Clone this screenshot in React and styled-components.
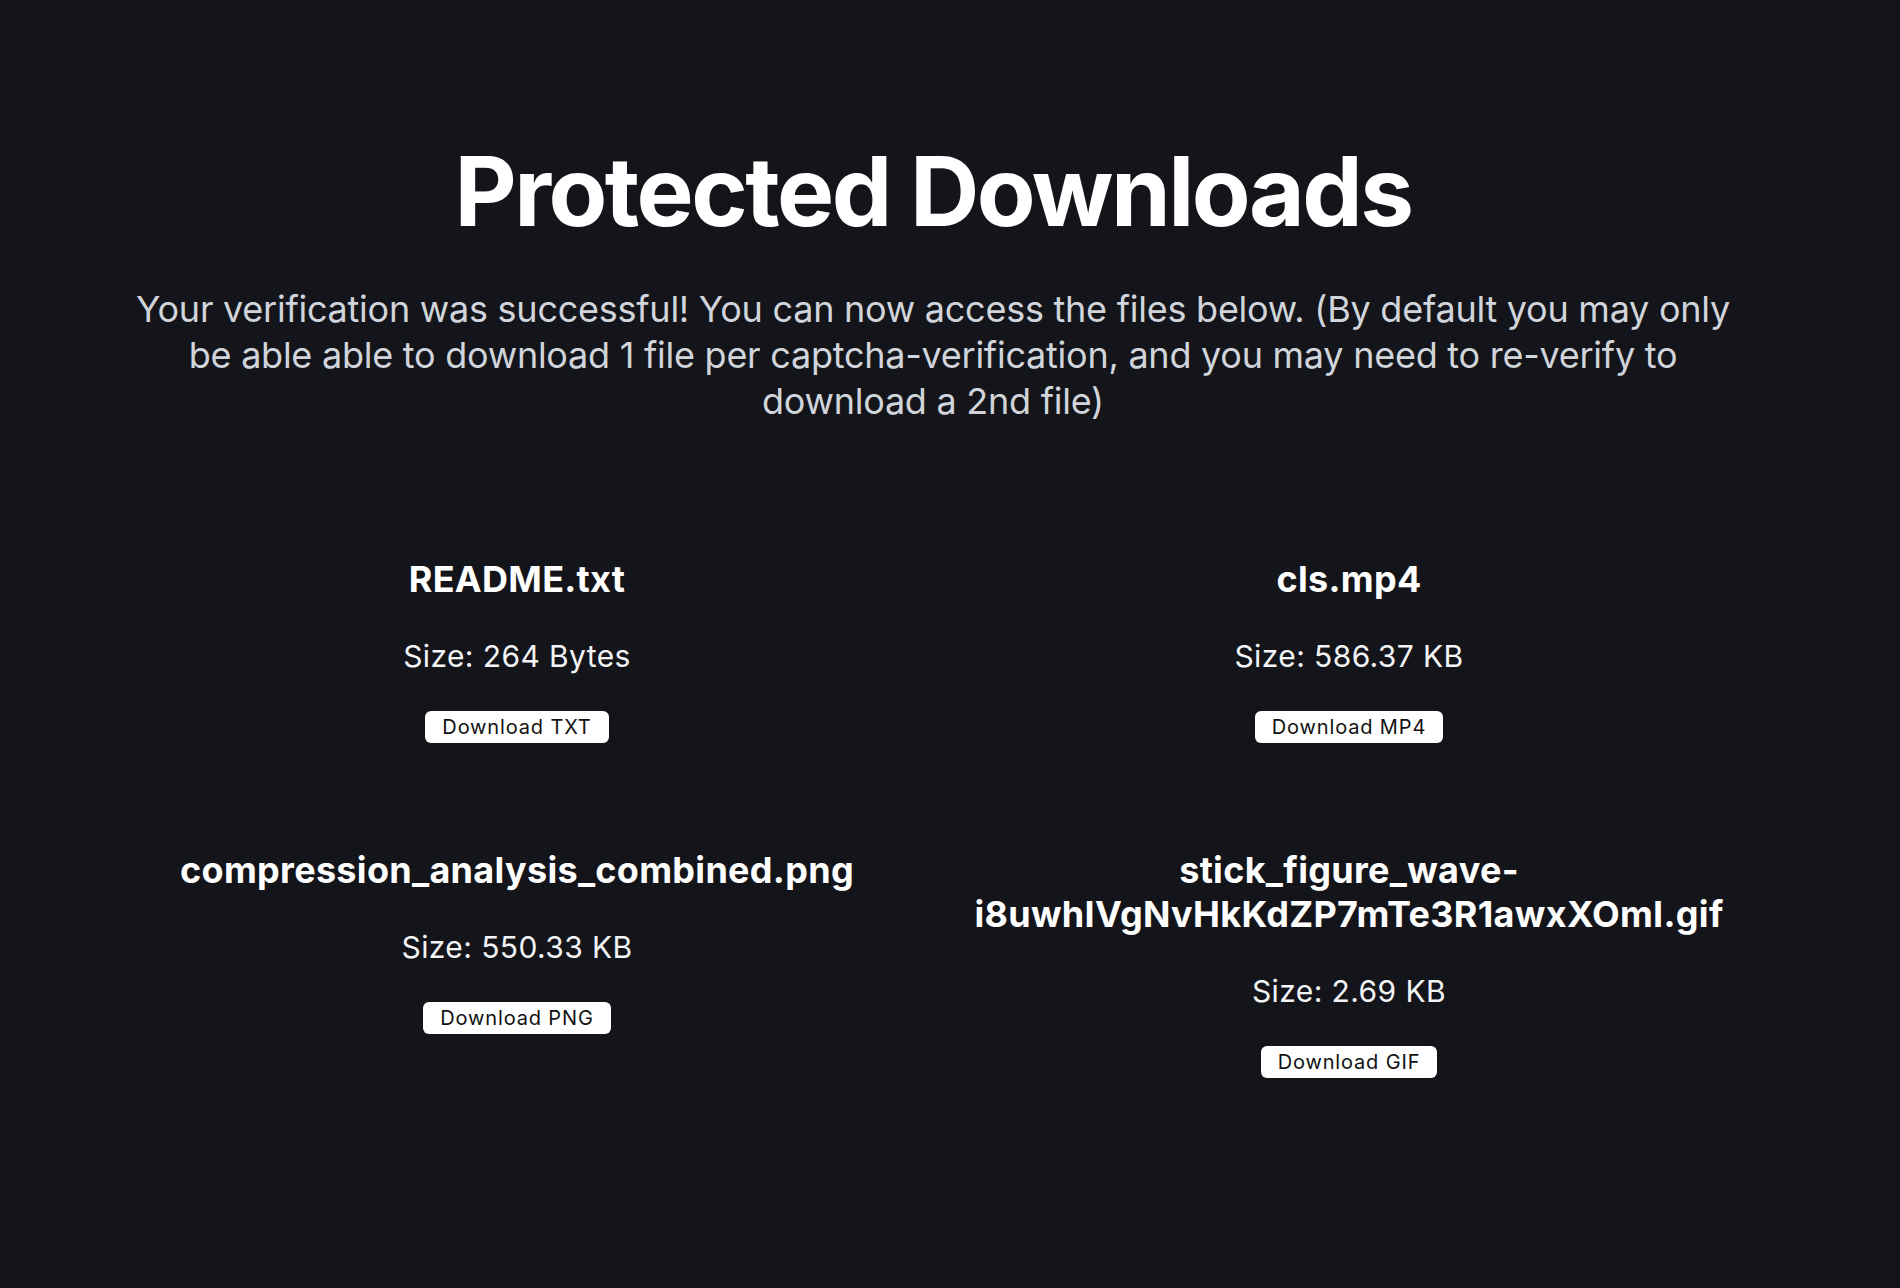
import React from "react";
import styled, { createGlobalStyle } from "styled-components";

const files = [
  { name: "README.txt", size: "264 Bytes", ext: "TXT" },
  { name: "cls.mp4", size: "586.37 KB", ext: "MP4" },
  { name: "compression_analysis_combined.png", size: "550.33 KB", ext: "PNG" },
  {
    name: "stick_figure_wave-i8uwhIVgNvHkKdZP7mTe3R1awxXOmI.gif",
    size: "2.69 KB",
    ext: "GIF",
  },
];

// Page reset + dark background
const GlobalStyle = createGlobalStyle`
  html, body {
    margin: 0;
    padding: 0;
    background: #14151a;
    min-height: 100%;
  }
  body {
    font-family: Inter, "Noto Sans", Arial, sans-serif;
    -webkit-font-smoothing: antialiased;
  }
`;

// Whole page
const Page = styled.div`
  min-height: 1288px;
  box-sizing: border-box;
  padding: 134px 34px 0 0;
  background: #14151a;
`;

// Centered column
const Main = styled.main`
  max-width: 1600px;
  margin: 0 auto;
  display: flex;
  flex-direction: column;
  align-items: center;
`;

const Title = styled.h1`
  margin: 0;
  color: #ffffff;
  font-size: 96px;
  line-height: 115px;
  font-weight: 700;
  letter-spacing: -2.5px;
  text-align: center;
`;

const Intro = styled.p`
  margin: 37px 0 0;
  color: #d1d5db;
  font-size: 36px;
  line-height: 46px;
  letter-spacing: -0.25px;
  text-align: center;
`;

// Two column file grid
const FileGrid = styled.div`
  margin-top: 133px;
  width: 100%;
  display: grid;
  grid-template-columns: 1fr 1fr;
  column-gap: 64px;
  row-gap: 105px;
`;

const FileCard = styled.div`
  display: flex;
  flex-direction: column;
  align-items: center;
  text-align: center;
`;

const FileName = styled.h3`
  margin: 0;
  color: #ffffff;
  font-size: 36px;
  line-height: 44px;
  font-weight: 700;
  letter-spacing: 0.3px;
  word-break: break-word;
`;

const FileSize = styled.p`
  margin: 37px 0 0;
  color: #f3f4f6;
  font-size: 30px;
  line-height: 36px;
  letter-spacing: 0.4px;
`;

const DownloadButton = styled.button`
  margin-top: 37px;
  height: 32px;
  padding: 0 17px;
  border: none;
  border-radius: 6px;
  background: #ffffff;
  color: #111111;
  font-family: Inter, "Liberation Sans", Arial, sans-serif;
  font-size: 20px;
  line-height: 32px;
  letter-spacing: 0.85px;
  cursor: pointer;
`;

const App = () => {
  return (
    <>
      <GlobalStyle />
      <Page>
        <Main>
          <Title>Protected Downloads</Title>
          <Intro>
            Your verification was successful! You can now access the files
            below. (By default you may only be able able to download 1 file per
            captcha-verification, and you may need to re-verify to download a
            2nd file)
          </Intro>
          <FileGrid>
            {files.map((f) => (
              <FileCard key={f.name}>
                <FileName>{f.name}</FileName>
                <FileSize>Size: {f.size}</FileSize>
                <DownloadButton>Download {f.ext}</DownloadButton>
              </FileCard>
            ))}
          </FileGrid>
        </Main>
      </Page>
    </>
  );
};

export default App;
